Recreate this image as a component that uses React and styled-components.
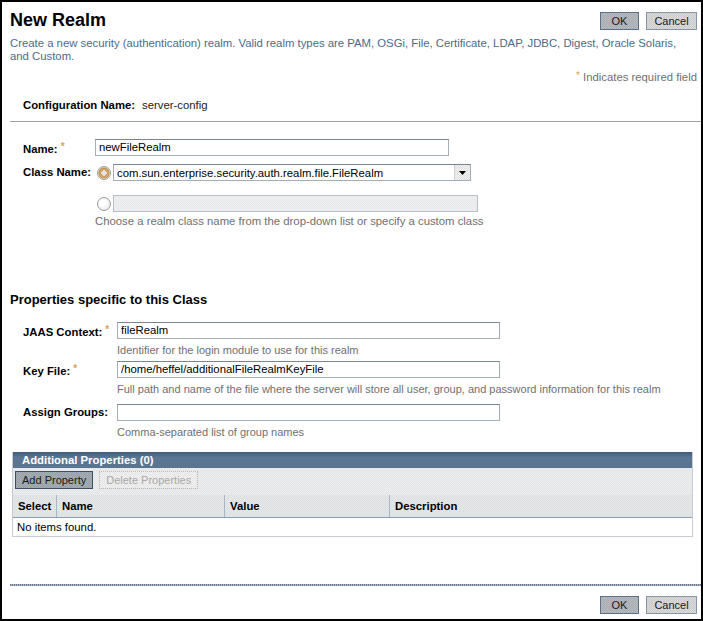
import React from 'react'
import styled, { createGlobalStyle } from 'styled-components'

const GlobalStyle = createGlobalStyle`
    html, body {
        margin: 0;
        padding: 0;
        background: #fff;
    }
    body {
        font-family: "Liberation Sans", Arial, sans-serif;
        font-size: 11.33px;
        color: #000;
    }
`;

// dithered grey used by the Sun-style buttons
const dither = (a, b) => `repeating-conic-gradient(${a} 0 25%, ${b} 0 50%) 0 0 / 2px 2px`

export default function App() {
    return (
        <>
            <GlobalStyle />
            <Frame>
                <Header>
                    <Title>New Realm</Title>
                    <ButtonGroup>
                        <Button primary>OK</Button>
                        <Button>Cancel</Button>
                    </ButtonGroup>
                </Header>
                <Description>
                    Create a new security (authentication) realm. Valid realm types are PAM, OSGi, File, Certificate, LDAP, JDBC, Digest, Oracle Solaris, and Custom.
                </Description>
                <RequiredNote><Star>*</Star> Indicates required field</RequiredNote>

                <ConfigRow>
                    <ConfigLabel>Configuration Name:</ConfigLabel>
                    <span>server-config</span>
                </ConfigRow>
                <Rule />

                <Form top={16}>
                    <FormRow>
                        <Label width={72}>Name:<Star>*</Star></Label>
                        <TextInput width={354} defaultValue="newFileRealm" />
                    </FormRow>
                    <FormRow gap={8}>
                        <Label width={73}>Class Name:</Label>
                        <Radio checked />
                        <Select>
                            <span>com.sun.enterprise.security.auth.realm.file.FileRealm</span>
                            <SelectArrow>
                                <svg width="7" height="4" viewBox="0 0 7 4"><path d="M0 0h7L3.5 4z" fill="#000" /></svg>
                            </SelectArrow>
                        </Select>
                    </FormRow>
                    <FormRow gap={14}>
                        <Label width={73} />
                        <Radio />
                        <DisabledInput />
                    </FormRow>
                    <Helper indent={72}>Choose a realm class name from the drop-down list or specify a custom class</Helper>
                </Form>

                <SectionTitle>Properties specific to this Class</SectionTitle>
                <Form top={13}>
                    <FormRow>
                        <Label width={94}>JAAS Context:<Star>*</Star></Label>
                        <TextInput width={383} defaultValue="fileRealm" />
                    </FormRow>
                    <Helper indent={94} loose>Identifier for the login module to use for this realm</Helper>
                    <FormRow gap={3}>
                        <Label width={94}>Key File:<Star>*</Star></Label>
                        <TextInput width={383} defaultValue="/home/heffel/additionalFileRealmKeyFile" />
                    </FormRow>
                    <Helper indent={94} loose>Full path and name of the file where the server will store all user, group, and password information for this realm</Helper>
                    <FormRow gap={8}>
                        <Label width={94}>Assign Groups:</Label>
                        <TextInput width={383} defaultValue="" />
                    </FormRow>
                    <Helper indent={94} loose>Comma-separated list of group names</Helper>
                </Form>

                <PropsTable>
                    <TableTitle>Additional Properties (0)</TableTitle>
                    <Toolbar>
                        <ToolButton>Add Property</ToolButton>
                        <ToolButton disabled>Delete Properties</ToolButton>
                    </Toolbar>
                    <HeadRow>
                        <HeadCell>Select</HeadCell>
                        <HeadCell>Name</HeadCell>
                        <HeadCell>Value</HeadCell>
                        <HeadCell>Description</HeadCell>
                    </HeadRow>
                    <EmptyRow>No items found.</EmptyRow>
                </PropsTable>

                <Footer>
                    <DottedRule />
                    <FooterButtons>
                        <Button primary>OK</Button>
                        <Button>Cancel</Button>
                    </FooterButtons>
                </Footer>
            </Frame>
        </>
    )
}

const Frame = styled.div`
    width: 703px;
    height: 621px;
    box-sizing: border-box;
    border: 2px solid #000;
    display: flex;
    flex-direction: column;
    overflow: hidden;
`;

const Header = styled.div`
    display: flex;
    justify-content: space-between;
    align-items: flex-start;
    padding: 0 4px 0 8px;
`;

const Title = styled.h1`
    margin: 0;
    padding-top: 8px;
    font-size: 18px;
    line-height: 21px;
    font-weight: bold;
    color: #000;
`;

const ButtonGroup = styled.div`
    display: flex;
    gap: 7px;
    margin-top: 10px;
`;

const Button = styled.button`
    font-family: inherit;
    font-size: 11px;
    height: 18px;
    padding: 0 6px;
    min-width: ${p => p.primary ? '39px' : '51px'};
    color: #1a1a1a;
    border: 1px solid ${p => p.primary ? '#5c7087' : '#8595a6'};
    background: ${p => p.primary ? dither('#b9bcc0', '#a6abb1') : dither('#dcdcdc', '#cacaca')};
    line-height: 16px;
`;

const Description = styled.p`
    margin: 6px 0 0;
    padding: 0 10px 0 8px;
    line-height: 13px;
    color: #4c6b8a;
`;

const RequiredNote = styled.div`
    margin-top: 6px;
    padding-right: 4px;
    text-align: right;
    line-height: 13px;
    color: #707070;
`;

const Star = styled.span`
    color: #d4a35c;
    font-size: 10px;
    vertical-align: 3px;
    margin-left: 3px;
    ${RequiredNote} & {
        margin-left: 0;
        vertical-align: 2px;
    }
`;

const ConfigRow = styled.div`
    margin-top: 15px;
    padding-left: 21px;
    line-height: 13px;
    display: flex;
    gap: 7px;
    color: #222;
`;

const ConfigLabel = styled.span`
    font-weight: bold;
    color: #000;
`;

const Rule = styled.div`
    margin: 9px 0 0 8px;
    height: 1px;
    background: #a2a2a2;
`;

const Form = styled.div`
    padding-left: 21px;
    margin-top: ${p => p.top}px;
`;

const FormRow = styled.div`
    display: flex;
    align-items: center;
    margin-top: ${p => (p.gap || 0)}px;
`;

const Label = styled.label`
    width: ${p => p.width}px;
    flex: none;
    font-weight: bold;
    line-height: 13px;
    align-self: flex-start;
    padding-top: 2px;
`;

const TextInput = styled.input`
    width: ${p => p.width}px;
    height: 17px;
    box-sizing: border-box;
    border: 1px solid #a4acb4;
    border-top-color: #7b8590;
    padding: 0 3px;
    font-family: inherit;
    font-size: 11.33px;
    color: #000;
    outline: none;
`;

const Radio = styled.span`
    width: 14px;
    height: 14px;
    flex: none;
    box-sizing: border-box;
    margin: 0 2px 0 1px;
    border-radius: 50%;
    border: 1px solid #9a9a9a;
    background: ${p => p.checked
        ? 'radial-gradient(circle, #e4e4e4 0 2.5px, #c98f3c 3px, #e0b070 4px, #b88b4c 5px, #f2f2f2 6px)'
        : 'radial-gradient(circle at 40% 40%, #fff 0 3px, #f0f0f0 6px)'};
`;

const Select = styled.div`
    width: 358px;
    height: 17px;
    box-sizing: border-box;
    border: 1px solid #a4acb4;
    border-top-color: #7b8590;
    display: flex;
    align-items: center;
    justify-content: space-between;
    padding-left: 3px;
    color: #000;
`;

const SelectArrow = styled.span`
    width: 15px;
    height: 15px;
    display: flex;
    align-items: center;
    justify-content: center;
    background: ${dither('#f4f4f4', '#dedede')};
    border-left: 1px solid #d0d0d0;
`;

const DisabledInput = styled.div`
    width: 365px;
    height: 17px;
    box-sizing: border-box;
    border: 1px solid #b8bec4;
    background: ${dither('#eef0f1', '#e6e8ea')};
`;

const Helper = styled.div`
    margin: ${p => p.loose ? 5 : 3}px 0 0 ${p => p.indent}px;
    font-size: ${p => p.loose ? '11px' : 'inherit'};
    line-height: 13px;
    color: #6f6f6f;
`;

const SectionTitle = styled.h2`
    margin: 64px 0 0;
    padding-left: 8px;
    font-size: 13px;
    line-height: 16px;
    font-weight: bold;
`;

const PropsTable = styled.div`
    margin: 13px 8px 0 10px;
    border: 1px solid #c6ccd3;
    border-top: none;
`;

const TableTitle = styled.div`
    height: 16px;
    line-height: 16px;
    padding-left: 9px;
    color: #fff;
    font-weight: bold;
    background: linear-gradient(#3e5b79, #5b7794 35%, #58748f);
`;

const Toolbar = styled.div`
    display: flex;
    gap: 6px;
    padding: 3px 2px 6px;
    background: ${dither('#eceeef', '#e2e4e6')};
`;

const ToolButton = styled.button`
    font-family: inherit;
    font-size: 11px;
    height: 18px;
    padding: 0 6px;
    line-height: 16px;
    color: ${p => p.disabled ? '#a8a8a8' : '#1a1a1a'};
    border: 1px ${p => p.disabled ? 'dotted #b8b8b8' : 'solid #3d4f62'};
    background: ${p => p.disabled ? dither('#f0f0f0', '#e6e6e6') : dither('#a9b0b7', '#959da5')};
`;

const HeadRow = styled.div`
    display: grid;
    grid-template-columns: 43px 168px 165px 1fr;
    height: 22px;
    background: ${dither('#e6e8ea', '#dcdfe2')};
    border-bottom: 1px solid #8a9db3;
`;

const HeadCell = styled.div`
    font-weight: bold;
    line-height: 22px;
    padding-left: 5px;
    & + & {
        border-left: 1px solid #a9b6c4;
    }
`;

const EmptyRow = styled.div`
    height: 18px;
    line-height: 18px;
    padding-left: 4px;
`;

const Footer = styled.div`
    margin-top: auto;
    padding-bottom: 5px;
`;

const DottedRule = styled.div`
    margin-left: 8px;
    height: 2px;
    background: repeating-linear-gradient(90deg, #6b7b92 0 1px, #aab4c2 1px 2px);
`;

const FooterButtons = styled.div`
    display: flex;
    justify-content: flex-end;
    gap: 7px;
    margin-top: 10px;
    padding-right: 4px;
`;
